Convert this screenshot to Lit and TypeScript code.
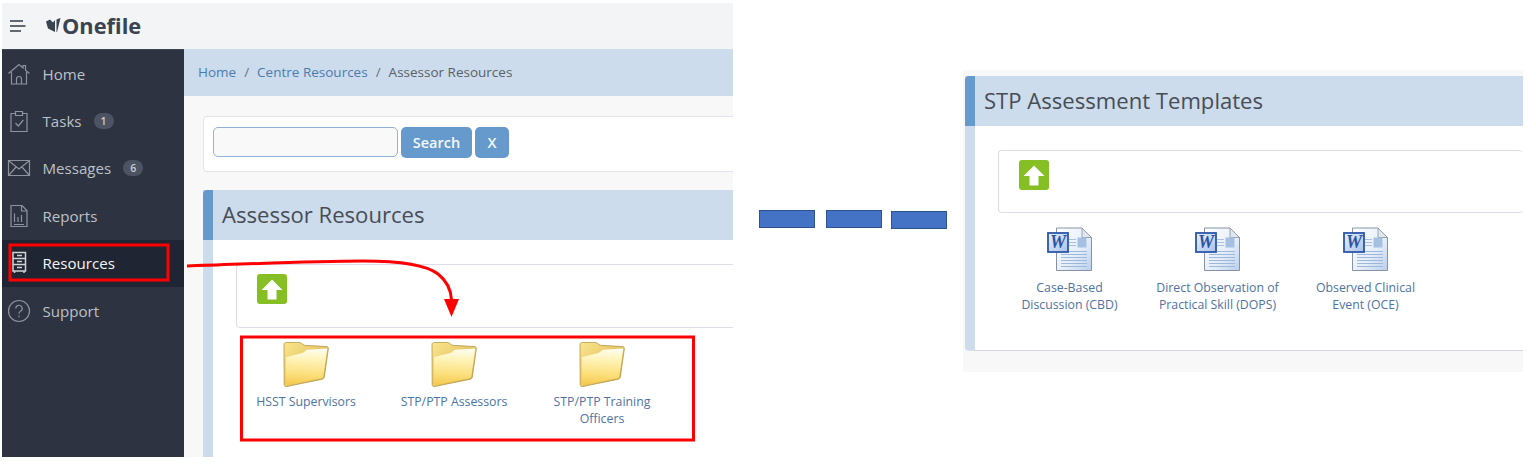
import { LitElement, html, css, svg } from "lit";
import { customElement } from "lit/decorators.js";

const upBtn = html`<span class="up"><svg width="30" height="30" viewBox="0 0 30 30"><rect width="30" height="30" rx="3" fill="#86bf24"/><path d="M15 5.500 25.500 16H19.500V25.500H10.500V16H4.500Z" fill="#fff"/></svg></span>`;

let uid = 0;
function folder() {
  const id = "f" + uid++;
  const bk = "b" + uid++;
  return html`<svg class="ico" width="46" height="46" viewBox="0 0 46 46">
    <defs>
      <linearGradient id=${id} x1="0.5" y1="0" x2="0.45" y2="1"><stop offset="0" stop-color="#fffdf0"/><stop offset="0.3" stop-color="#fff3b8"/><stop offset="0.7" stop-color="#fbdf7c"/><stop offset="1" stop-color="#f5c94e"/></linearGradient>
      <linearGradient id=${bk} x1="0" y1="0" x2="1" y2="1"><stop offset="0" stop-color="#fbe68f"/><stop offset="1" stop-color="#d3a83e"/></linearGradient>
    </defs>
    <path d="M1 2.500C1 1 2 .5 3.500 .5L16 .3C18 .3 19.500 2.500 21.500 3.300L43 4.500C44.800 4.600 45.500 5.500 45.300 7L41.300 35C41 36.500 40 37 39 37.300L3.500 44.500C2 44.800 1.200 44 1.200 42.500Z" fill=${`url(#${bk})`} stroke="#b39748" stroke-width=".8"/>
    <path d="M3 16.500C3 15.500 3.500 15 4.500 14.800L19.300 11C21.500 10 22.500 8 24.300 7.700L44.300 6.500L40.300 34.500C40.100 35.500 39.500 36 38.500 36.200L2.800 43.500Z" fill=${`url(#${id})`}/>
  </svg>`;
}
function wordIcon() {
  const id = "w" + uid++;
  const bx = "x" + uid++;
  return html`<svg class="ico" width="46" height="46" viewBox="0 0 46 46">
    <defs>
      <linearGradient id=${id} x1="0" y1="0" x2="1" y2="1"><stop offset="0" stop-color="#ffffff"/><stop offset="0.6" stop-color="#e4edf9"/><stop offset="1" stop-color="#b9cfec"/></linearGradient>
      <linearGradient id=${bx} x1="0" y1="0" x2="1" y2="1"><stop offset="0" stop-color="#e9f0fa"/><stop offset="1" stop-color="#a9c3e8"/></linearGradient>
    </defs>
    <path d="M9.500 1H35L44.500 10.500V43.500H9.500Z" fill=${`url(#${id})`} stroke="#8793a4" stroke-width="1"/>
    <path d="M35 1V10.500H44.500Z" fill="#dfe6ee" stroke="#8793a4" stroke-width=".8"/>
    <rect x="30.500" y="10.500" width="9" height="10" fill="#a5c0e2"/>
    ${[12, 15, 18].map((y) => svg`<rect x="22" y=${y} width="7" height="1" fill="#a9c0de"/>`)}
    ${[24, 27, 30, 33, 36, 39].map((y) => svg`<rect x="14" y=${y} width="26" height="1" fill="#9db8dc"/>`)}
    <rect x="1" y="6" width="20" height="19" fill=${`url(#${bx})`} stroke="#2c56a8" stroke-width="1.800"/>
    <text x="11" y="21" text-anchor="middle" class="w">W</text>
  </svg>`;
}

@customElement("app-root")
export class AppRoot extends LitElement {
  static styles = css`
    :host { display: block; position: relative; width: 1536px; height: 475px; background: #fff; overflow: hidden; font-family: "Open Sans", "Liberation Sans", sans-serif; }
    * { box-sizing: border-box; }
    svg { display: block; flex: none; }
    .shot { position: absolute; overflow: hidden; }
    .left { left: 2px; top: 3px; width: 731px; height: 454px; display: grid; grid-template-columns: 182px 1fr; grid-template-rows: 46px 1fr; background: #f8f8f8; }
    .top { grid-column: 1 / 3; background: #f3f4f6; display: flex; align-items: center; gap: 20px; padding-left: 8px; }
    .logo { display: flex; align-items: center; gap: 1px; font-size: 21.800px; font-weight: 700; color: #3a4350; line-height: 1; }
    .side { background: #2d3340; display: flex; flex-direction: column; border-top: 1px solid #3e4654; }
    .item { height: 47.400px; display: flex; align-items: center; padding-left: 4.500px; gap: 12px; color: #bcc1c9; font-size: 15.100px; }
    .item.on { background: #1f2532; color: #f4f5f7; }
    .item svg { width: 24px; height: 24px; color: #8e939d; }
    .item.on svg { color: #d0d3d8; }
    .badge { background: #4c5362; color: #c8ccd2; font-size: 10.500px; font-weight: 600; border-radius: 8px; min-width: 20px; height: 16px; line-height: 16px; text-align: center; }
    .main { display: flex; flex-direction: column; min-width: 0; }
    .crumb { height: 47px; background: #ccdcec; display: flex; align-items: center; padding: 0 0 1px 14px; font-size: 13.500px; color: #5a5f66; white-space: nowrap; flex: none; }
    .crumb a { color: #4a7bb0; }
    .crumb i { font-style: normal; margin: 0 8px; color: #6b7380; }
    .content { padding: 20px 0 0 19px; display: flex; flex-direction: column; gap: 18px; min-width: 0; }
    .search { height: 56px; width: 560px; flex: none; background: #fff; border: 1px solid #e3e4ec; border-radius: 4px; display: flex; align-items: flex-start; padding: 10px 0 0 9px; gap: 3px; }
    .search .in { width: 185px; height: 30px; border: 1px solid #8fb3da; border-radius: 5px; background: #f9f9f9; }
    .btn { height: 31px; background: #6699cc; color: #f4f8fc; font-size: 14.500px; font-weight: 600; border-radius: 5px; display: flex; align-items: center; justify-content: center; }
    .btn.s { width: 71px; } .btn.x { width: 34px; }
    .panel { border-left: 10px solid #ccdcec; background: #fff; position: relative; }
    .head { height: 50px; background: #ccdcec; margin-left: -10px; border-left: 10px solid #6699cc; display: flex; align-items: center; padding: 0 0 2px 9px; font-size: 22.100px; color: #484d55; border-top-left-radius: 4px; white-space: nowrap; }
    .card { height: 64px; background: #fff; border: 1px solid #dcdcea; border-radius: 4px; padding: 9px 0 0 20px; }
    .up { display: block; width: 30px; height: 30px; }
    .p1 { width: 600px; height: 300px; flex: none; }
    .p1 .card { margin: 24px 0 0 23px; border-right: 0; }
    .tiles { display: flex; }
    .tile { display: flex; flex-direction: column; align-items: center; color: #4d73a3; font-size: 12.300px; line-height: 17px; text-align: center; flex: none; width: 148px; padding: 0 10px; }
    .tile .ico { margin-bottom: 5px; }
    .p1 .tiles { margin: 14px 0 0 19px; }
    .right { left: 963px; top: 70px; width: 560px; height: 302px; background: #f8f8f8; padding: 6px 0 0 2px; }
    .p2 { height: 275px; border-bottom: 1px solid #d5d5e6; border-bottom-left-radius: 4px; }
    .p2 .card { margin: 24px 0 0 23px; height: 63px; border-right: 0; }
    .p2 .tiles { margin: 14px 0 0 20.500px; }
    .p2 .tile .ico { margin-bottom: 6px; }
    .bar { position: absolute; top: 210px; width: 56px; height: 18px; background: #4472c4; border: 1px solid #2f528f; }
    .bar.b1 { left: 759px; } .bar.b2 { left: 826px; } .bar.b3 { left: 891px; top: 211px; }
    .w { font: italic 700 18px "Liberation Serif", serif; fill: #2a55a5; }
    .over { position: absolute; left: 0; top: 0; pointer-events: none; }
  `;

  private navIcon(n: string) {
    const paths: Record<string, unknown> = {
      home: svg`<path d="M1.500 11.500 12 2.500l4 3.500V3.500h2.500V8.200l4 3.300M4.500 10v12h15V10M9.500 22v-5a2.500 2.500 0 0 1 5 0v5" />`,
      tasks: svg`<path d="M8 4.500H4v18h16v-18h-4M8.500 2.500H15.500V6.500H8.500ZM8.500 14l2.800 3 5-6"/>`,
      msg: svg`<path d="M1.500 4.500h21v15h-21ZM2 5 12 13 22 5M2 19l7.500-8.500M22 19l-7.500-8.500"/>`,
      rep: svg`<path d="M4 1.500h11l5 5v16H4ZM14.500 1.500v5.500h5.500M7.500 9.500V18M11 13v5M14.500 11V18M7 20.500h10"/>`,
      res: svg`<path d="M6 1.500h12.500v18.500H6ZM6 7.500h12.500M6 13.500h12.500M10 4.500h5M10 10.500h5M10 16.500h5M7.500 20v2M17 20v2" stroke-width="1.500"/>`,
      sup: svg`<circle cx="12" cy="12" r="10.500"/><path d="M8.800 9.500a3.200 3.200 0 1 1 4.700 2.800c-1 .6-1.500 1.200-1.500 2.400M12 16.500v1.800"/>`,
    };
    return html`<svg viewBox="0 0 24 24" fill="none" stroke="currentColor" stroke-width="1.200">${paths[n]}</svg>`;
  }

  render() {
    return html`
      <div class="shot left">
        <div class="top">
          <svg width="16" height="14" viewBox="0 0 16 14"><path d="M0 2h13M0 7h15.500M0 12h11" stroke="#333a46" stroke-width="1.600" fill="none"/></svg>
          <div class="logo"><svg width="15" height="15" viewBox="0 0 15 15"><path d="M0 3.500 4 1.500 7 4.500 9 2 9 14 2 10.500Z M10.500 1.500 14.500 0 11 14H10.500Z" fill="#3a4350"/></svg><span>Onefile</span></div>
        </div>
        <nav class="side">
          <div class="item">${this.navIcon("home")}<span>Home</span></div>
          <div class="item">${this.navIcon("tasks")}<span>Tasks</span><span class="badge">1</span></div>
          <div class="item">${this.navIcon("msg")}<span>Messages</span><span class="badge">6</span></div>
          <div class="item">${this.navIcon("rep")}<span>Reports</span></div>
          <div class="item on">${this.navIcon("res")}<span>Resources</span></div>
          <div class="item">${this.navIcon("sup")}<span>Support</span></div>
        </nav>
        <div class="main">
          <div class="crumb"><a>Home</a><i>/</i><a>Centre Resources</a><i>/</i><span>Assessor Resources</span></div>
          <div class="content">
            <div class="search"><span class="in"></span><span class="btn s">Search</span><span class="btn x">X</span></div>
            <section class="panel p1">
              <div class="head">Assessor Resources</div>
              <div class="card">${upBtn}</div>
              <div class="tiles">
                <div class="tile">${folder()}<span>HSST Supervisors</span></div>
                <div class="tile">${folder()}<span>STP/PTP Assessors</span></div>
                <div class="tile">${folder()}<span>STP/PTP Training Officers</span></div>
              </div>
            </section>
          </div>
        </div>
      </div>

      <div class="bar b1"></div>
      <div class="bar b2"></div>
      <div class="bar b3"></div>

      <div class="shot right">
        <section class="panel p2">
          <div class="head">STP Assessment Templates</div>
          <div class="card">${upBtn}</div>
          <div class="tiles">
            <div class="tile">${wordIcon()}<span>Case-Based Discussion (CBD)</span></div>
            <div class="tile">${wordIcon()}<span>Direct Observation of Practical Skill (DOPS)</span></div>
            <div class="tile">${wordIcon()}<span>Observed Clinical Event (OCE)</span></div>
          </div>
        </section>
      </div>

      <svg class="over" width="1536" height="475" viewBox="0 0 1536 475" fill="none">
        <rect x="10" y="245" width="158" height="35" stroke="#f00" stroke-width="3"/>
        <rect x="241.500" y="337" width="452" height="103" stroke="#f00" stroke-width="3"/>
        <path d="M187 266C250 264 310 261 363 261C395 261 425 264 438 274C447 281 451 290 451.500 300" stroke="#f00" stroke-width="3"/>
        <path d="M444 299H459L451.500 317Z" fill="#f00"/>
      </svg>
    `;
  }
}
